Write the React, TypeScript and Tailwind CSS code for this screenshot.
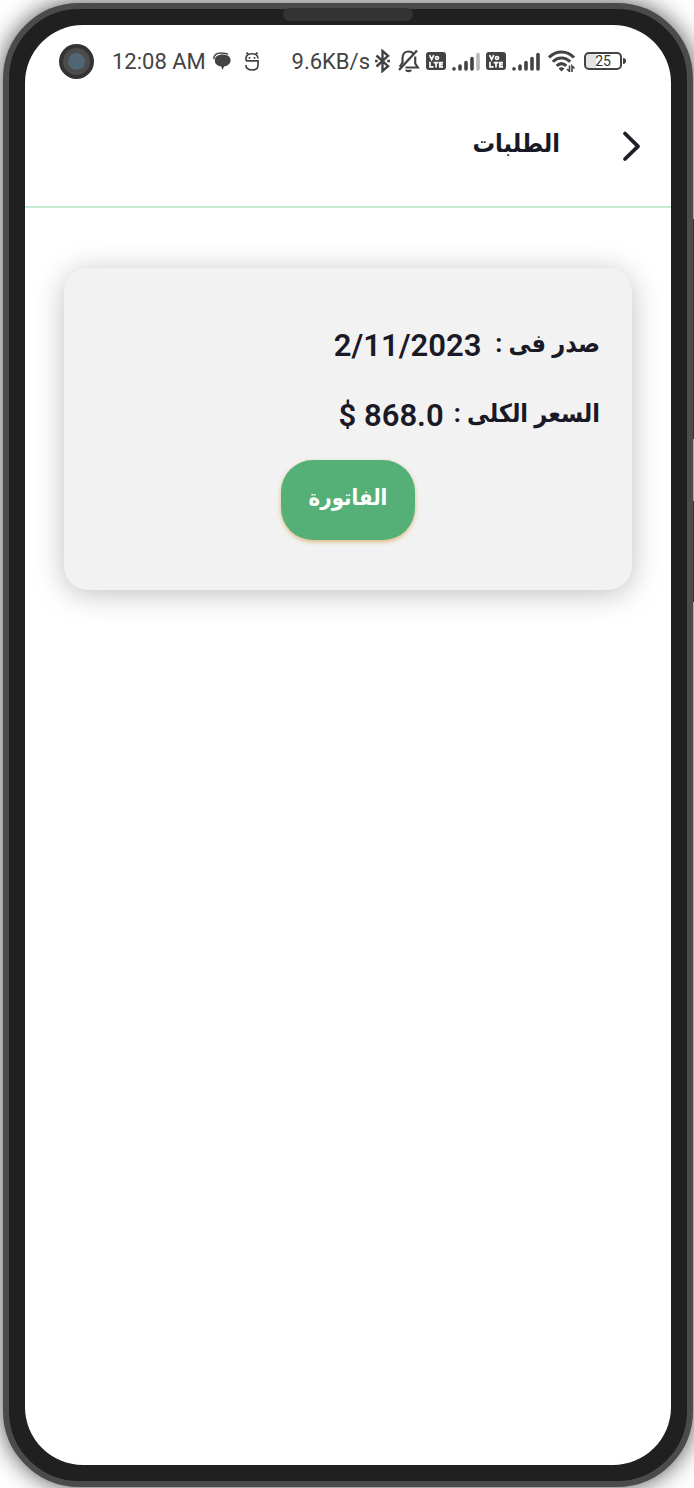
import React from "react";

const arabic = "font-['Roboto','DejaVu_Sans_Condensed','DejaVu_Sans',sans-serif]";

function ChatIcon() {
  return (
    <svg width="18" height="18" viewBox="0 0 18 18" aria-hidden="true">
      <path d="M.8 7C.8 3 3.500 1 8 1c3 0 5.500 0 7 1.500" fill="none" stroke="#434343" strokeWidth="1.500" />
      <path d="M9.500 2.600c5.200 0 8.100 2.300 8.100 5.900 0 3-2.400 5.300-6.400 5.900L9.300 18l-1-3.600C4.200 14 1.800 11.700 1.800 8.500c0-3.600 3-5.900 7.700-5.900z" fill="#434343" />
    </svg>
  );
}

function MascotIcon() {
  return (
    <svg width="14" height="19" viewBox="0 0 14 19" fill="none" stroke="#434343" strokeWidth="1.700" aria-hidden="true">
      <path d="M1.500.5 3.200 2.500c2.300-.9 5.300-.9 7.600 0L12.500.5M1 8.800V6c0-1.500.7-2.700 2.200-3.500M13 6.500c0-1.700-.7-3.200-2.200-4" />
      <path d="M1 8.800h12.500M1 8.800h12v4.500c0 2.700-2 4.700-6 4.700s-6-2-6-4.500v-.5" />
      <path d="M4.500 5v1.700M9.500 5v1.700" />
    </svg>
  );
}

function BluetoothIcon() {
  return (
    <svg width="16" height="24" viewBox="0 0 16 24" fill="none" stroke="#434343" strokeWidth="2.400" aria-hidden="true">
      <path d="M2.500 6.500 14 17.200 8.500 22V2L14 6.800 2.500 17.500" />
      <path d="M1 12h2.700M13.300 12H16" />
    </svg>
  );
}

function MutedBellIcon() {
  return (
    <svg width="22" height="24" viewBox="0 0 22 24" fill="none" stroke="#434343" strokeWidth="2.200" aria-hidden="true">
      <path d="M4.500 14V9.500C4.500 5 7 2.500 10.500 2.500c2.200 0 4 .9 5.200 2.500M17.200 7.500V14.500l2.600 4H7.500" />
      <path d="M1 21 19 1.500" strokeWidth="2.400" />
      <path d="M4.500 13.500 1.800 17.800" />
      <path d="M7 20.800h7c-.5 1.700-1.800 2.500-3.500 2.500s-3-.8-3.500-2.500z" fill="#434343" stroke="none" />
    </svg>
  );
}

function VolteBadge() {
  return (
    <svg width="20" height="18" viewBox="0 0 20 18" aria-hidden="true">
      <rect width="20" height="18" rx="3" fill="#434343" />
      <g fill="none" stroke="#fff" strokeWidth="1.700">
        <path d="m3.600 3.200 2.100 4.300 2.100-4.300M4 9.800v5h3.500M7.600 10.600h4.800M10 10.600v5M17 10.600h-3.200v4.200H17M14 12.700h2.700" />
        <circle cx="11" cy="6" r="1.500" />
      </g>
    </svg>
  );
}

function SignalIcon({ full }: { full: boolean }) {
  return (
    <svg width="28" height="19" viewBox="0 0 28 19" fill="none" stroke="#434343" strokeWidth="3.600" strokeLinecap="round" aria-hidden="true">
      <path d="M2 16.800v.2M8 14V17M14 10.500V17M20 6.500V17" />
      <path d="M26 2.500V17" stroke={full ? "#434343" : "#b9b9b9"} />
    </svg>
  );
}

function WifiIcon() {
  return (
    <svg width="28" height="22" viewBox="0 0 28 22" fill="none" stroke="#434343" strokeWidth="3" aria-hidden="true">
      <path d="M1 7.500C8 0 19 0 26 7.500M4.800 11.800c5-5.200 12.400-5.200 17.400 0M8.700 15.800c3-2.800 6.600-2.800 9.600 0" />
      <path d="M10.500 18.500c1.800-1.700 4.200-1.700 6 0l-3 3z" fill="#434343" stroke="none" />
      <path d="M21.500 15.500v6L19 19M24 22v-6l2.500 2.500" strokeWidth="1.600" />
    </svg>
  );
}

function BatteryIcon() {
  return (
    <div className="flex items-center gap-px" role="img" aria-label="Battery 25%">
      <div className="flex h-[18px] w-[38px] items-center justify-center rounded-[5px] border-2 border-[#434343] bg-linear-to-r from-[#e3e3e3] from-30% to-white to-30% text-[14px] leading-none text-[#333333]">
        25
      </div>
      <div className="h-1.5 w-[3px] rounded-r-sm bg-[#434343]" />
    </div>
  );
}

function StatusBar() {
  return (
    <div dir="ltr" className="flex h-[72px] items-center justify-between pr-[45px] pl-[34px] text-[22px] leading-6 text-[#434343]">
      <div className="flex items-center">
        <div className="mr-[18px] flex size-[35px] items-center justify-center rounded-full bg-[#333333]">
          <div className="flex size-[27px] items-center justify-center rounded-full bg-[#4c4c4c]">
            <div className="size-[17px] rounded-full bg-[#516675]" />
          </div>
        </div>
        <span className="mr-[7px] pt-0.5">12:08 AM</span>
        <ChatIcon />
        <span className="ml-3.5">
          <MascotIcon />
        </span>
      </div>
      <div className="flex items-center gap-1.5">
        <div className="flex items-center gap-1">
          <span className="pt-0.5">9.6KB/s</span>
          <BluetoothIcon />
        </div>
        <span className="ml-0.5">
          <MutedBellIcon />
        </span>
        <VolteBadge />
        <SignalIcon full={false} />
        <VolteBadge />
        <SignalIcon full />
        <span className="ml-0.5">
          <WifiIcon />
        </span>
        <span className="ml-0.5">
          <BatteryIcon />
        </span>
      </div>
    </div>
  );
}

function Header() {
  return (
    <header className="flex h-[111px] items-center border-b-2 border-[#c5ead2] pr-7 pb-3">
      <button type="button" aria-label="رجوع" className="flex w-[52px] justify-start">
        <svg width="24" height="36" viewBox="0 0 24 36" fill="none" stroke="#1f1f27" strokeWidth="3.800" strokeLinecap="round" strokeLinejoin="round" aria-hidden="true">
          <path d="m6 5.500 13 12.800L6 31" />
        </svg>
      </button>
      <h1 className="mr-[31px] pb-1 text-[25px] leading-10 font-bold">الطلبات</h1>
    </header>
  );
}

function OrderCard() {
  return (
    <article className="mx-[39px] mt-[60px] flex h-[322px] flex-col rounded-3xl bg-[#f2f2f2] px-8 pt-[49px] shadow-[0_4px_30px_rgba(0,0,0,0.25)]">
      <p className="flex h-[58px] items-center gap-3.5 text-[25px] font-bold">
        <span className="pb-1">صدر فى :</span>
        <bdi dir="ltr" className="text-[31px] font-semibold">2/11/2023</bdi>
      </p>
      <p className="mt-3 flex h-[58px] items-center gap-2.5 text-[25px] font-bold">
        <span className="pb-1">السعر الكلى :</span>
        <bdi dir="ltr" className="text-[31px] font-semibold">$ 868.0</bdi>
      </p>
      <button
        type="button"
        className="mt-[15px] h-20 w-[134px] self-center rounded-[32px] bg-[#55b078] pb-1.5 text-[22px] font-bold text-white shadow-[0_2px_4px_rgba(205,150,60,0.6)]"
      >
        الفاتورة
      </button>
    </article>
  );
}

export default function App() {
  return (
    <div className="flex min-h-screen flex-col overflow-hidden bg-white pt-[3px] pr-px pb-px pl-[3px]">
      <div className="relative flex grow flex-col rounded-[76px] border-6 border-[#4b4b4b] bg-[#202020] p-4 shadow-[0_0_24px_rgba(0,0,0,0.7)]">
        <div className="absolute -top-px left-1/2 h-[13px] w-[130px] -translate-x-1/2 rounded-full bg-[#333333]" />
        <div className="absolute top-[210px] -right-[7px] h-[220px] w-px bg-[#333333]" />
        <div className="absolute top-[492px] -right-[7px] h-[101px] w-px bg-[#333333]" />
        <main dir="rtl" lang="ar" className={`${arabic} flex grow flex-col rounded-[58px] bg-white text-[#1a1926]`}>
          <StatusBar />
          <Header />
          <OrderCard />
        </main>
      </div>
    </div>
  );
}
